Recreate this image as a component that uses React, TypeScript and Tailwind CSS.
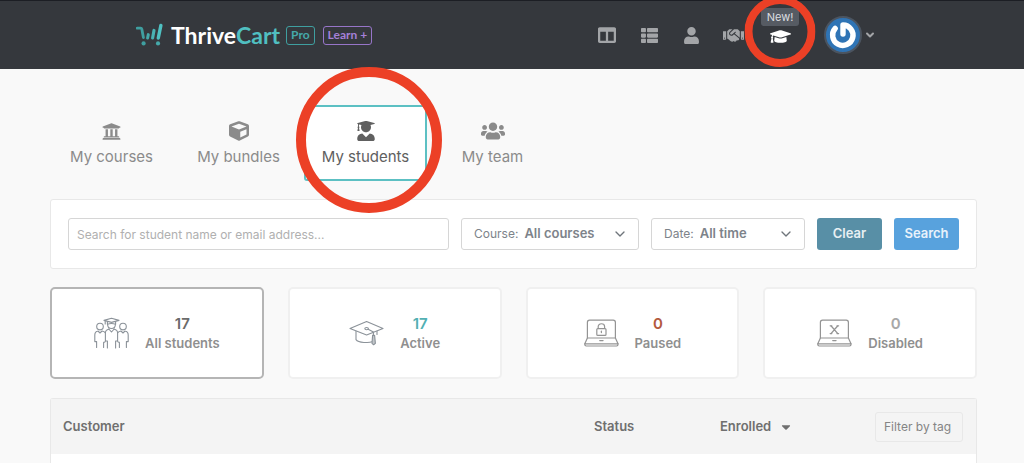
import type { ReactNode } from "react";
import {
  FaColumns,
  FaThList,
  FaUser,
  FaHandshake,
  FaGraduationCap,
  FaUniversity,
  FaCube,
  FaUserGraduate,
  FaUsers,
  FaCaretDown,
} from "react-icons/fa";
import { ChevronDown } from "lucide-react";

const NAV = [
  { label: "Dashboard", icon: <FaColumns size={18} /> },
  { label: "Products", icon: <FaThList size={17} /> },
  { label: "Customers", icon: <FaUser size={17} /> },
  { label: "Affiliates", icon: <FaHandshake size={21} /> },
];

const TABS = [
  { label: "My courses", icon: <FaUniversity size={19} /> },
  { label: "My bundles", icon: <FaCube size={20} /> },
  { label: "My students", icon: <FaUserGraduate size={20} />, active: true },
  { label: "My team", icon: <FaUsers size={24} /> },
];

const STATS = [
  { label: "All students", value: 17, color: "text-[#6b6b6b]", icon: <GroupIcon />, active: true },
  { label: "Active", value: 17, color: "text-[#52b0b3]", icon: <CapIcon /> },
  { label: "Paused", value: 0, color: "text-[#b3593f]", icon: <LaptopIcon kind="lock" /> },
  { label: "Disabled", value: 0, color: "text-[#a8a8a8]", icon: <LaptopIcon kind="cross" /> },
];

/* ── Drawings ── */

function CartLogo() {
  return (
    <svg width="27" height="24" viewBox="0 0 27 24" fill="none" strokeLinecap="round" strokeLinejoin="round" className="text-[#3f9fa0]">
      <path d="M1.2 5.2H4.6Q5.6 5.2 5.9 6.4L7.4 14.6" stroke="currentColor" strokeWidth="2.8" />
      <path d="M11.6 15L12.3 11.6" stroke="#45a9aa" strokeWidth="3" />
      <path d="M16.6 15L18 7.4" stroke="#49b3b4" strokeWidth="3.1" />
      <path d="M22.3 15L24.9 2.4" stroke="#4fc1c2" strokeWidth="3.4" />
      <circle cx="7.6" cy="20.4" r="2.1" fill="currentColor" />
      <circle cx="22" cy="20.4" r="2.1" fill="#45a9aa" />
    </svg>
  );
}

function Avatar() {
  return (
    <svg width="38" height="38" viewBox="0 0 38 38" fill="none">
      <circle cx="19" cy="19" r="18" fill="#2f74b5" stroke="#4b5460" strokeWidth="2" />
      <path
        d="M19 18V9A10.2 10.2 0 1 1 11.2 12.4"
        stroke="#fff"
        strokeWidth="5.4"
        strokeLinecap="round"
        strokeLinejoin="round"
      />
    </svg>
  );
}

function GroupIcon() {
  return (
    <svg width="35" height="32" viewBox="0 0 35 32" fill="none" stroke="#8b9299" strokeWidth="1.1" strokeLinecap="round" strokeLinejoin="round">
      <path d="M10 3.4L17.5 1.2L25 3.4L17.5 5.4Z" />
      <path d="M13.4 4.6V7.2Q17.5 5.8 21.6 7.2V4.6M11.2 3.8V7" />
      <path d="M13.6 7.2C13.6 13 21.4 13 21.4 7.2" />
      <circle cx="6" cy="9.6" r="3.3" />
      <circle cx="29" cy="9.6" r="3.3" />
      <path d="M14.8 12L17.5 15L20.2 12" />
      <path d="M14.8 12.2C12.4 12.6 11.4 13.6 11.4 16V24H13.4V31M20.2 12.2C22.6 12.6 23.6 13.6 23.6 16V24H21.6V31" />
      <path d="M4 14C1.8 14.4 0.8 15.6 0.8 18V24.6H2.6V30.4M4 14L6 16L8 14C9.4 14.2 10.6 14.8 11.2 15.6M9.6 25.4V30.4M9.6 25.4Q11.2 25.4 11.4 24" />
      <path d="M31 14C33.2 14.4 34.2 15.6 34.2 18V24.6H32.4V30.4M31 14L29 16L27 14C25.6 14.2 24.4 14.8 23.8 15.6M25.4 25.4V30.4M25.4 25.4Q23.8 25.4 23.6 24" />
    </svg>
  );
}

function CapIcon() {
  return (
    <svg width="35" height="32" viewBox="0 0 35 32" fill="none" stroke="#8b9299" strokeWidth="1.1" strokeLinecap="round" strokeLinejoin="round">
      <path d="M1 11.6L17.6 4.6L34 11.6L17.6 18Z" />
      <path d="M7 14.4V22.6C9.4 26 20.4 26 23 24.8M28 14.4V17.4" />
      <ellipse cx="17.6" cy="11.6" rx="1.8" ry="1.1" />
      <path d="M19.2 12.2L24.4 15V18.4" />
      <path d="M23.6 18.4H25.6L26.4 26.4L24.6 27.8L23 26.4Z" fill="#c2c6ca" />
    </svg>
  );
}

function LaptopIcon({ kind }: { kind: "lock" | "cross" }) {
  return (
    <svg width="35" height="32" viewBox="0 0 35 32" fill="none" stroke="#949494" strokeWidth="1.2" strokeLinecap="round" strokeLinejoin="round">
      <path d="M3.4 21V5.4Q3.4 3.2 5.6 3.2H29.2Q31.4 3.2 31.4 5.4V21" />
      <path d="M3.4 21H31.4L34 26.8H0.8Z" />
      <path d="M0.8 26.8V27.6Q0.8 29 2.2 29H32.6Q34 29 34 27.6V26.8" />
      <path d="M15.8 23.6H19" strokeWidth="1.4" />
      {kind === "lock" ? (
        <>
          <rect x="12.8" y="11.6" width="9.2" height="6.8" rx="1" />
          <path d="M14.2 11.4V9.6C14.2 5.8 20.6 5.8 20.6 9.6V11.4" />
          <path d="M17.4 14.2V15.6" />
        </>
      ) : (
        <path d="M14 8.8L20.8 16.6M20.8 8.8L14 16.6M13.2 8.8H14.8M20 8.8H21.6M13.2 16.6H14.8M20 16.6H21.6" strokeWidth="1.3" />
      )}
    </svg>
  );
}

/* Red marker ring, laid over its relative parent */
function Ring({ size, width, place }: { size: number; width: number; place: string }) {
  return (
    <svg width={size} height={size} className={`pointer-events-none absolute z-10 max-w-none ${place}`}>
      <circle cx={size / 2} cy={size / 2} r={(size - width) / 2} fill="none" stroke="#ec4026" strokeWidth={width} />
    </svg>
  );
}

/* ── Controls ── */

function FilterSelect({ id, label, width, children }: { id: string; label: string; width: string; children: ReactNode }) {
  return (
    <div className={`relative flex h-8 items-center rounded-[3px] border border-[#d6d6d6] bg-white pl-3 text-[#7d838a] ${width}`}>
      <label htmlFor={id} className="mr-1.5 text-[12px]">{label}</label>
      <select id={id} className="h-full min-w-0 flex-1 appearance-none bg-transparent font-semibold outline-none">
        {children}
      </select>
      <ChevronDown size={16} strokeWidth={2} className="pointer-events-none absolute right-2.5 text-[#6f757b]" />
    </div>
  );
}

export default function App() {
  return (
    <div className="flex min-h-screen flex-col bg-[#f9f9f9] font-[Inter,sans-serif] text-[13px] text-[#8b8b8b]">
      {/* ── Header ── */}
      <header className="flex h-[69px] items-center justify-between border-t border-[#1c1e24] bg-[#35383d] pr-[148px] pl-[136px]">
        <a href="#" className="flex items-center">
          <CartLogo />
          <span className="ml-2 font-[Lato,sans-serif] text-[23px] leading-6 font-bold text-white">
            Thrive<span className="text-[#50bfc1]">Cart</span>
          </span>
          <span className="ml-1.5 flex h-[19px] items-center rounded-[3px] border border-[#3f9fa0] px-1 font-[Lato,sans-serif] text-[12px] font-bold text-[#45a9aa]">
            Pro
          </span>
          <span className="ml-2 flex h-[19px] items-center rounded-[3px] border border-[#9775c9] px-1 font-[Lato,sans-serif] text-[12px] font-bold text-[#a580d8]">
            Learn +
          </span>
        </a>

        <nav className="flex items-center text-[#a3a5a8]">
          {NAV.map((n) => (
            <button key={n.label} aria-label={n.label} className="flex w-[42px] justify-center">
              {n.icon}
            </button>
          ))}
          <button aria-label="Learn" className="relative flex h-[62px] w-[52px] flex-col items-center text-white">
            <span className="mt-1 rounded-[3px] bg-[#565b63] px-1.5 text-[11px] leading-[18px] text-[#dcdee0]">New!</span>
            <FaGraduationCap size={21} />
            <Ring size={71} width={8} place="-top-2 left-1/2 -translate-x-1/2" />
          </button>
          <button aria-label="Account" className="ml-4.5 flex items-center">
            <Avatar />
            <ChevronDown size={12} strokeWidth={4} className="ml-0.5" />
          </button>
        </nav>
      </header>

      <main className="flex flex-1 flex-col pt-9 pr-[47px] pl-[50px]">
        {/* ── Section tabs ── */}
        <nav className="flex gap-1">
          {TABS.map((t) => (
            <a
              key={t.label}
              href="#"
              className={
                "relative flex h-[76px] w-[123px] flex-col items-center rounded-[3px] border-2 pt-3 text-[15px] " +
                (t.active ? "border-[#5cc0c3] bg-white text-[#606060]" : "border-transparent text-[#8b8b8b]")
              }
            >
              <span className="flex h-6 items-center">{t.icon}</span>
              <span className="leading-7">{t.label}</span>
              {t.active && <Ring size={146} width={10} place="-top-10 -left-2.5" />}
            </a>
          ))}
        </nav>

        {/* ── Filters ── */}
        <form className="mt-[18px] flex h-[70px] items-center gap-3 rounded-[3px] border border-[#e8e8e8] bg-white px-[17px]">
          <input
            type="text"
            aria-label="Search students"
            placeholder="Search for student name or email address..."
            className="h-8 min-w-0 flex-1 rounded-[3px] border border-[#d6d6d6] px-2 text-[12px] outline-none placeholder:text-[#b0b0b0]"
          />
          <FilterSelect id="course" label="Course:" width="w-[178px]">
            <option>All courses</option>
          </FilterSelect>
          <FilterSelect id="date" label="Date:" width="w-[154px]">
            <option>All time</option>
          </FilterSelect>
          <button type="button" className="h-8 w-[65px] rounded-[3px] bg-[#588fa6] font-semibold text-[#e8f0f3]">Clear</button>
          <button type="button" className="h-8 w-[65px] rounded-[3px] bg-[#58a2dd] font-semibold text-[#e8f2fb]">Search</button>
        </form>

        {/* ── Stats ── */}
        <div className="mt-[18px] grid grid-cols-4 gap-6">
          {STATS.map((s) => (
            <button
              key={s.label}
              className={
                "flex h-[92px] items-center justify-center gap-4 rounded-[5px] border-2 bg-white " +
                (s.active ? "border-[#b5b5b5]" : "border-[#f0f0f0]")
              }
            >
              {s.icon}
              <span className="flex flex-col items-center">
                <span className={`text-[15px] leading-5 font-semibold ${s.color}`}>{s.value}</span>
                <span className="leading-[18px] font-semibold text-[#8f8f8f]">{s.label}</span>
              </span>
            </button>
          ))}
        </div>

        {/* ── Students table ── */}
        <div className="mt-[19px] flex-1 rounded-t-[3px] border border-b-0 border-[#e8e8e8] bg-white">
          <table className="w-full table-fixed text-left">
            <thead className="bg-[#f4f4f4] text-[#6f6f6f]">
              <tr className="h-[55px]">
                <th className="pl-3 font-semibold">Customer</th>
                <th className="w-[126px] font-semibold">Status</th>
                <th className="w-[155px] font-semibold">
                  <button className="flex items-center gap-2">
                    Enrolled <FaCaretDown size={14} />
                  </button>
                </th>
                <th className="w-[101px] font-normal">
                  <input
                    type="text"
                    aria-label="Filter by tag"
                    placeholder="Filter by tag"
                    className="block h-[30px] w-[88px] rounded-[3px] border border-[#e8e8e8] px-2 text-[12px] font-normal outline-none placeholder:text-[#858585]"
                  />
                </th>
              </tr>
            </thead>
          </table>
        </div>
      </main>
    </div>
  );
}
